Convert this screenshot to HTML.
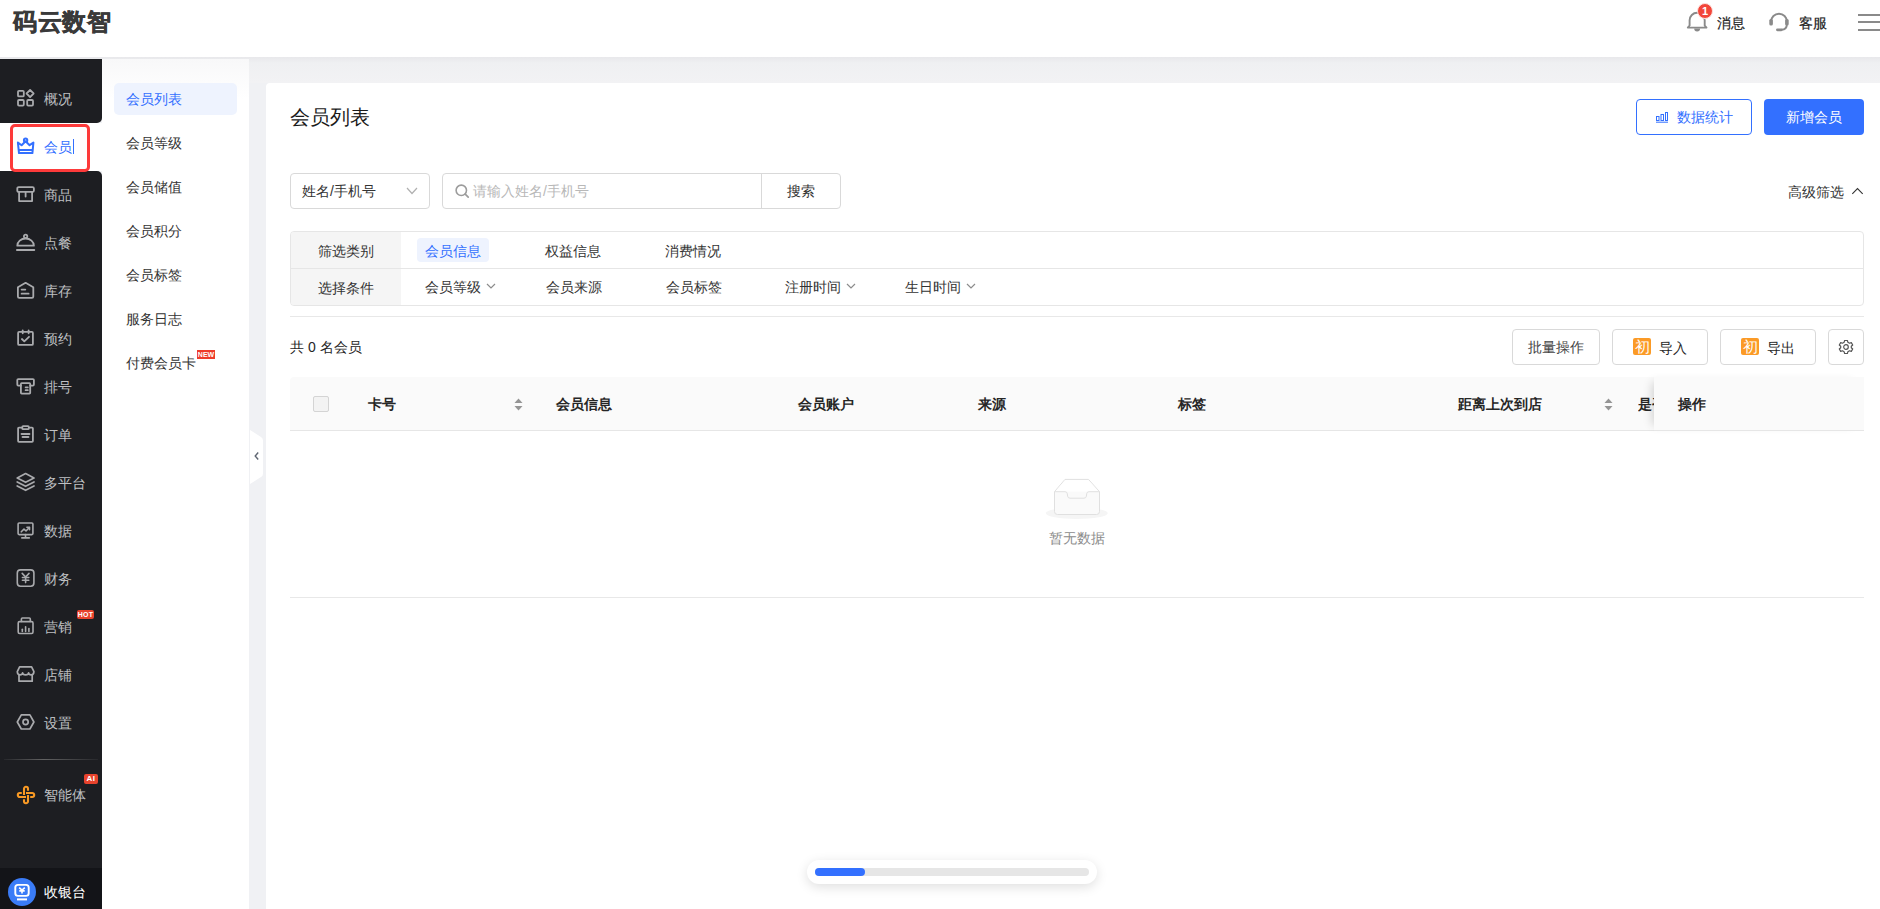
<!DOCTYPE html>
<html><head><meta charset="utf-8"><style>
*{box-sizing:border-box;margin:0;padding:0}
html,body{width:1880px;height:909px;overflow:hidden}
body{position:relative;background:#f0f1f4;font-family:"Liberation Sans",sans-serif;font-size:14px;color:#333}
.a{position:absolute;white-space:nowrap;line-height:16px}
.r{position:absolute}
svg{position:absolute;overflow:visible}
.si{color:#bfc0c3}
.bd{position:absolute;border:1px solid #d9d9d9;border-radius:4px;background:#fff}
.th{font-weight:bold;color:#262626}
</style></head><body>
<div class="r" style="left:0;top:0;width:1880px;height:57px;background:#fff"></div>
<div class="r" style="left:0;top:57px;width:1880px;height:26px;background:linear-gradient(#e8e8eb,#eff0f2 6px,#f2f2f4)"></div>
<div class="a" style="left:13px;top:8px;font-size:24px;line-height:28px;font-weight:bold;color:#3a3a3a;letter-spacing:0.5px;-webkit-text-stroke:0.5px #3a3a3a">码云数智</div>
<div class="r" style="left:0;top:59px;width:102px;height:64px;background:#1d1e22;border-bottom-right-radius:5px"></div>
<div class="r" style="left:0;top:123px;width:102px;height:48px;background:#fff"></div>
<div class="r" style="left:0;top:171px;width:102px;height:697px;background:#1d1e22;border-top-right-radius:5px"></div>
<div class="r" style="left:0;top:868px;width:102px;height:41px;background:#131418"></div>
<div class="r" style="left:10px;top:124px;width:80px;height:48px;border:3px solid #fd3a3a;border-radius:5px"></div>
<div class="r" style="left:4px;top:759px;width:94px;height:1px;background:linear-gradient(90deg,rgba(80,80,84,0.2),rgba(110,110,110,0.85) 42%,rgba(80,80,84,0.2))"></div>
<div class="a si" style="left:44px;top:91px;">概况</div>
<div class="a" style="left:44px;top:139px;color:#3370ff">会员</div>
<div class="r" style="left:73px;top:139px;width:1px;height:15px;background:#3370ff"></div>
<div class="a si" style="left:44px;top:187px;">商品</div>
<div class="a si" style="left:44px;top:235px;">点餐</div>
<div class="a si" style="left:44px;top:283px;">库存</div>
<div class="a si" style="left:44px;top:331px;">预约</div>
<div class="a si" style="left:44px;top:379px;">排号</div>
<div class="a si" style="left:44px;top:427px;">订单</div>
<div class="a si" style="left:44px;top:475px;">多平台</div>
<div class="a si" style="left:44px;top:523px;">数据</div>
<div class="a si" style="left:44px;top:571px;">财务</div>
<div class="a si" style="left:44px;top:619px;">营销</div>
<div class="a si" style="left:44px;top:667px;">店铺</div>
<div class="a si" style="left:44px;top:715px;">设置</div>
<div class="a si" style="left:44px;top:787px;">智能体</div>
<div class="a" style="left:44px;top:884px;color:#fff">收银台</div>
<div class="r" style="left:102px;top:59px;width:147px;height:850px;background:linear-gradient(#f8f8f9,#fff 40px)"></div>
<div class="r" style="left:114px;top:83px;width:123px;height:32px;background:#eef3fe;border-radius:5px"></div>
<div class="a" style="left:126px;top:91px;color:#3370ff">会员列表</div>
<div class="a" style="left:126px;top:135px;color:#333">会员等级</div>
<div class="a" style="left:126px;top:179px;color:#333">会员储值</div>
<div class="a" style="left:126px;top:223px;color:#333">会员积分</div>
<div class="a" style="left:126px;top:267px;color:#333">会员标签</div>
<div class="a" style="left:126px;top:311px;color:#333">服务日志</div>
<div class="a" style="left:126px;top:355px;color:#333">付费会员卡</div>
<div class="r" style="left:266px;top:83px;width:1614px;height:826px;background:#fff;border-top-left-radius:4px"></div>
<svg style="left:1686px;top:10px" width="22" height="22" viewBox="0 0 22 22"><path d="M3.6 15.5 V10.3 A7.55 7.55 0 0 1 18.7 10.3 V15.5 L20.5 17.6 H1.8 Z" fill="none" stroke="#8a8a8a" stroke-width="1.9" stroke-linejoin="round"/><path d="M8.2 18.6 H14.1 A2.95 3 0 0 1 8.2 18.6 Z" fill="#8a8a8a"/></svg>
<div class="r" style="left:1697px;top:3px;width:16px;height:16px;border-radius:50%;background:#f2463a;border:1px solid #fde0dc;color:#fff;font-size:11px;line-height:14px;text-align:center;font-weight:bold">1</div>
<div class="a" style="left:1717px;top:15px;color:#1f1f1f;-webkit-text-stroke:0.2px #1f1f1f">消息</div>
<svg style="left:1768px;top:11px" width="22" height="22" viewBox="0 0 22 22"><path d="M3.1 13 V10.6 A7.9 7.9 0 0 1 18.9 10.6 V13" fill="none" stroke="#8a8a8a" stroke-width="1.9"/><rect x="1.3" y="8" width="3.6" height="6.6" rx="1.6" fill="#8a8a8a"/><rect x="17.1" y="8" width="3.6" height="6.6" rx="1.6" fill="#8a8a8a"/><path d="M18.9 13 Q18.9 18.7 13.5 18.8" fill="none" stroke="#8a8a8a" stroke-width="1.9"/><rect x="8" y="17.4" width="6.7" height="2.9" rx="1.45" fill="#8a8a8a"/></svg>
<div class="a" style="left:1799px;top:15px;color:#1f1f1f;-webkit-text-stroke:0.2px #1f1f1f">客服</div>
<div class="r" style="left:1858px;top:14px;width:22px;height:2px;background:#8a8a8a"></div>
<div class="r" style="left:1858px;top:21px;width:22px;height:2px;background:#8a8a8a"></div>
<div class="r" style="left:1858px;top:29px;width:22px;height:2px;background:#8a8a8a"></div>
<div class="a" style="left:290px;top:106px;font-size:20px;line-height:22px;color:#1a1a1a">会员列表</div>
<div class="r" style="left:1636px;top:99px;width:116px;height:36px;border:1px solid #3370ff;border-radius:4px;background:#fff"></div>
<svg style="left:1655px;top:111px" width="14" height="12" viewBox="0 0 14 12"><g fill="none" stroke="#3370ff" stroke-width="1"><rect x="1.5" y="5.5" width="2.5" height="4"/><rect x="6" y="3.5" width="2.5" height="6"/><rect x="10.5" y="1.5" width="2" height="8"/><path d="M1 11.2 H13"/></g></svg>
<div class="a" style="left:1677px;top:109px;color:#3370ff">数据统计</div>
<div class="r" style="left:1764px;top:99px;width:100px;height:36px;border-radius:4px;background:#3370ff"></div>
<div class="a" style="left:1786px;top:109px;color:#fff">新增会员</div>
<div class="bd" style="left:290px;top:173px;width:140px;height:36px"></div>
<div class="a" style="left:302px;top:183px;color:#333">姓名/手机号</div>
<svg style="left:406px;top:187px" width="12" height="8" viewBox="0 0 12 8"><path d="M1 1 L6 6.5 L11 1" fill="none" stroke="#b0b0b0" stroke-width="1.2"/></svg>
<div class="bd" style="left:442px;top:173px;width:399px;height:36px"></div>
<div class="r" style="left:761px;top:173px;width:1px;height:36px;background:#d9d9d9"></div>
<svg style="left:455px;top:184px" width="15" height="15" viewBox="0 0 15 15"><circle cx="6.3" cy="6.3" r="5.2" fill="none" stroke="#9c9c9c" stroke-width="1.6"/><path d="M10.2 10.2 L13.2 13.2" stroke="#9c9c9c" stroke-width="1.7" stroke-linecap="round"/></svg>
<div class="a" style="left:473px;top:183px;color:#b8b8b8">请输入姓名/手机号</div>
<div class="a" style="left:787px;top:183px;color:#333">搜索</div>
<div class="a" style="left:1788px;top:184px;color:#333">高级筛选</div>
<svg style="left:1851px;top:187px" width="13" height="8" viewBox="0 0 13 8"><path d="M1.3 6.8 L6.5 1.6 L11.7 6.8" fill="none" stroke="#333" stroke-width="1.1"/></svg>
<div class="r" style="left:290px;top:231px;width:1574px;height:75px;border:1px solid #e6e6e6;border-radius:4px;background:#fff;overflow:hidden"><div class="r" style="left:0;top:0;width:110px;height:73px;background:#f5f5f5"></div><div class="r" style="left:0;top:36px;width:1572px;height:1px;background:#e6e6e6"></div></div>
<div class="a" style="left:318px;top:243px;color:#333">筛选类别</div>
<div class="a" style="left:318px;top:280px;color:#333">选择条件</div>
<div class="r" style="left:417px;top:238px;width:72px;height:24px;border-radius:4px;background:#eef3fe"></div>
<div class="a" style="left:425px;top:243px;color:#3370ff">会员信息</div>
<div class="a" style="left:545px;top:243px;color:#333">权益信息</div>
<div class="a" style="left:665px;top:243px;color:#333">消费情况</div>
<div class="a" style="left:425px;top:279px;color:#333">会员等级</div>
<svg style="left:486px;top:283px" width="10" height="6" viewBox="0 0 10 6"><path d="M1 1 L5 5 L9 1" fill="none" stroke="#8c8c8c" stroke-width="1.2"/></svg>
<div class="a" style="left:546px;top:279px;color:#333">会员来源</div>
<div class="a" style="left:666px;top:279px;color:#333">会员标签</div>
<div class="a" style="left:785px;top:279px;color:#333">注册时间</div>
<svg style="left:846px;top:283px" width="10" height="6" viewBox="0 0 10 6"><path d="M1 1 L5 5 L9 1" fill="none" stroke="#8c8c8c" stroke-width="1.2"/></svg>
<div class="a" style="left:905px;top:279px;color:#333">生日时间</div>
<svg style="left:966px;top:283px" width="10" height="6" viewBox="0 0 10 6"><path d="M1 1 L5 5 L9 1" fill="none" stroke="#8c8c8c" stroke-width="1.2"/></svg>
<div class="r" style="left:290px;top:316px;width:1574px;height:1px;background:#e8e8e8"></div>
<div class="a" style="left:290px;top:339px;color:#262626">共 0 名会员</div>
<div class="bd" style="left:1512px;top:329px;width:88px;height:36px"></div>
<div class="a" style="left:1528px;top:339px;color:#444">批量操作</div>
<div class="bd" style="left:1612px;top:329px;width:96px;height:36px"></div>
<div class="r" style="left:1633px;top:338px;width:18px;height:17px;border-radius:2px;background:#fb9a26;color:#fff;font-size:15px;line-height:17px;text-align:center">初</div>
<div class="a" style="left:1659px;top:340px;color:#262626">导入</div>
<div class="bd" style="left:1720px;top:329px;width:96px;height:36px"></div>
<div class="r" style="left:1741px;top:338px;width:18px;height:17px;border-radius:2px;background:#fb9a26;color:#fff;font-size:15px;line-height:17px;text-align:center">初</div>
<div class="a" style="left:1767px;top:340px;color:#262626">导出</div>
<div class="bd" style="left:1828px;top:329px;width:36px;height:36px"></div>
<svg style="left:1838px;top:339px" width="16" height="16" viewBox="0 0 16 16"><path d="M6.6 1.5 H9.4 L9.9 3.3 L11.5 4.2 L13.3 3.6 L14.7 6 L13.3 7.3 V8.7 L14.7 10 L13.3 12.4 L11.5 11.8 L9.9 12.7 L9.4 14.5 H6.6 L6.1 12.7 L4.5 11.8 L2.7 12.4 L1.3 10 L2.7 8.7 V7.3 L1.3 6 L2.7 3.6 L4.5 4.2 L6.1 3.3 Z" fill="none" stroke="#555" stroke-width="1.2" stroke-linejoin="round"/><circle cx="8" cy="8" r="2.3" fill="none" stroke="#555" stroke-width="1.2"/></svg>
<div class="r" style="left:290px;top:377px;width:1574px;height:54px;background:#fafafa;border-top-left-radius:4px;border-bottom:1px solid #e6e6e6"></div>
<div class="r" style="left:313px;top:396px;width:16px;height:16px;border:1px solid #d4d4d4;border-radius:2px;background:#f3f3f3"></div>
<div class="a th" style="left:368px;top:396px;">卡号</div>
<svg style="left:514px;top:398px" width="9" height="13" viewBox="0 0 9 13"><path d="M4.5 0.5 L8.5 5 H0.5 Z" fill="#959595"/><path d="M0.5 8 H8.5 L4.5 12.5 Z" fill="#959595"/></svg>
<div class="a th" style="left:556px;top:396px;">会员信息</div>
<div class="a th" style="left:798px;top:396px;">会员账户</div>
<div class="a th" style="left:978px;top:396px;">来源</div>
<div class="a th" style="left:1178px;top:396px;">标签</div>
<div class="a th" style="left:1458px;top:396px;">距离上次到店</div>
<svg style="left:1604px;top:398px" width="9" height="13" viewBox="0 0 9 13"><path d="M4.5 0.5 L8.5 5 H0.5 Z" fill="#959595"/><path d="M0.5 8 H8.5 L4.5 12.5 Z" fill="#959595"/></svg>
<div class="r" style="left:1638px;top:377px;width:16px;height:53px;overflow:hidden"><div class="a th" style="left:0;top:19px">是否</div></div>
<div class="r" style="left:1654px;top:377px;width:210px;height:53px;background:#fafafa;box-shadow:-7px 0 9px -5px rgba(0,0,0,0.16)"></div>
<div class="r" style="left:1654px;top:430px;width:210px;height:1px;background:#e6e6e6"></div>
<div class="a th" style="left:1678px;top:396px;">操作</div>
<svg style="left:1045px;top:477px" width="64" height="44" viewBox="0 0 64 44"><ellipse cx="31.8" cy="36.3" rx="31" ry="5.7" fill="#f5f5f5"/><path d="M9.5 14.7 L20 2.4 H43.5 L54.5 14.7 V34.5 Q54.5 37.5 51.5 37.5 H12.5 Q9.5 37.5 9.5 34.5 Z" fill="#fafafa" stroke="#e0e0e0" stroke-width="1"/><path d="M10 14.7 L20.2 3 H43.3 L54 14.7 Z" fill="#fff"/><path d="M9.5 14.7 H20 Q22 14.7 22.3 16.7 L22.6 19.2 Q23 21.2 25 21.2 H39 Q41 21.2 41.4 19.2 L41.7 16.7 Q42 14.7 44 14.7 H54.5" fill="#fafafa" stroke="#e0e0e0" stroke-width="1"/></svg>
<div class="a" style="left:1049px;top:530px;color:#8c8c8c">暂无数据</div>
<div class="r" style="left:290px;top:597px;width:1574px;height:1px;background:#e8e8e8"></div>
<div class="r" style="left:807px;top:860px;width:290px;height:24px;border-radius:12px;background:#fff;box-shadow:0 3px 12px rgba(0,0,0,0.13)"></div>
<div class="r" style="left:815px;top:868px;width:274px;height:8px;border-radius:4px;background:#e6e6e6"></div>
<div class="r" style="left:815px;top:868px;width:50px;height:8px;border-radius:4px;background:#3370ff"></div>
<svg style="left:250px;top:430px" width="14" height="54" viewBox="0 0 14 54"><path d="M0 0 L11 7 Q13 8.2 13 10.5 V43.5 Q13 45.8 11 47 L0 54 Z" fill="#fff"/><path d="M8.2 22.5 L5.2 26 L8.2 29.5" fill="none" stroke="#5f6672" stroke-width="1.4"/></svg>
<svg style="left:16px;top:88px" width="20" height="20" viewBox="0 0 20 20"><g fill="none" stroke="#a9aaad" stroke-width="1.8" stroke-linejoin="round" stroke-linecap="round"><rect x="2" y="2.8" width="5.8" height="5.6" rx="1"/><path d="M14.1 1.9 L17.6 5.5 L14.1 9.1 L10.6 5.5 Z"/><rect x="2" y="12" width="5.8" height="5.6" rx="1"/><rect x="11.2" y="12" width="5.8" height="5.6" rx="1"/></g></svg>
<svg style="left:16px;top:136px" width="20" height="20" viewBox="0 0 20 20"><g fill="none" stroke="#3370ff" stroke-width="2" stroke-linejoin="round" stroke-linecap="round"><path d="M1.9 6.6 L5.6 9.2 L9.6 5.2 L13.6 9.2 L17.4 6.6 L16.4 17.1 H3 Z"/><path d="M3.6 13.9 H15.8"/><circle cx="9.6" cy="4.3" r="1.7"/></g></svg>
<svg style="left:16px;top:184px" width="20" height="20" viewBox="0 0 20 20"><g fill="none" stroke="#a9aaad" stroke-width="1.8" stroke-linejoin="round" stroke-linecap="round"><rect x="1.3" y="3.1" width="16.6" height="4.8" rx="1.4"/><path d="M3.1 8 V17.1 H16.1 V8"/><path d="M9.6 8 V12.6"/></g></svg>
<svg style="left:16px;top:232px" width="20" height="20" viewBox="0 0 20 20"><g fill="none" stroke="#a9aaad" stroke-width="1.8" stroke-linejoin="round" stroke-linecap="round"><path d="M1.3 13.7 A8.3 7.2 0 0 1 17.9 13.7 Z"/><circle cx="9.6" cy="4.4" r="1.7"/><path d="M0.9 18 H18.3"/></g></svg>
<svg style="left:16px;top:280px" width="20" height="20" viewBox="0 0 20 20"><g fill="none" stroke="#a9aaad" stroke-width="1.8" stroke-linejoin="round" stroke-linecap="round"><path d="M1.9 7.2 L9.6 2.8 L17.3 7.2 V16.6 Q17.3 17.9 16 17.9 H3.2 Q1.9 17.9 1.9 16.6 Z"/><path d="M5.6 9.6 H9.3"/><path d="M5.6 13.7 H12.6"/></g></svg>
<svg style="left:16px;top:328px" width="20" height="20" viewBox="0 0 20 20"><g fill="none" stroke="#a9aaad" stroke-width="1.8" stroke-linejoin="round" stroke-linecap="round"><rect x="2.1" y="3.9" width="14.8" height="13" rx="1"/><path d="M6.7 2.4 V5.3"/><path d="M12.6 2.4 V5.3"/><path d="M5.9 11 L8.3 13.3 L13 8.8"/></g></svg>
<svg style="left:16px;top:376px" width="20" height="20" viewBox="0 0 20 20"><g fill="none" stroke="#a9aaad" stroke-width="1.8" stroke-linejoin="round" stroke-linecap="round"><path d="M4.9 9.6 H2.3 Q1.3 9.6 1.3 8.6 V4.1 Q1.3 3.1 2.3 3.1 H16.9 Q17.9 3.1 17.9 4.1 V8.6 Q17.9 9.6 16.9 9.6 H14.2"/><rect x="4.9" y="7.2" width="9.3" height="10.4" rx="0.8"/><path d="M9.6 11.3 H11.8"/><path d="M9.6 14.2 H11.8"/></g></svg>
<svg style="left:16px;top:424px" width="20" height="20" viewBox="0 0 20 20"><g fill="none" stroke="#a9aaad" stroke-width="1.8" stroke-linejoin="round" stroke-linecap="round"><path d="M5.8 3.7 H3 Q2.1 3.7 2.1 4.6 V16.9 Q2.1 17.8 3 17.8 H16 Q16.9 17.8 16.9 16.9 V4.6 Q16.9 3.7 16 3.7 H13.3"/><rect x="6.3" y="2.2" width="6.5" height="3" rx="0.8"/><path d="M5.5 10 H13.5"/><path d="M6.5 13 H12.5"/></g></svg>
<svg style="left:16px;top:472px" width="20" height="20" viewBox="0 0 20 20"><g fill="none" stroke="#a9aaad" stroke-width="1.7" stroke-linejoin="round" stroke-linecap="round"><path d="M9.6 1.6 L18 6 L9.6 10.3 L1.2 6 Z"/><path d="M1.2 10 L9.6 14.3 L18 10"/><path d="M1.2 14 L9.6 18.3 L18 14"/></g></svg>
<svg style="left:16px;top:520px" width="20" height="20" viewBox="0 0 20 20"><g fill="none" stroke="#a9aaad" stroke-width="1.6" stroke-linejoin="round" stroke-linecap="round"><rect x="2.1" y="3" width="14.8" height="11.6" rx="1"/><path d="M9.5 14.6 V17.2"/><path d="M5.8 17.9 H13.3"/><path d="M5.3 11.8 L8 9 L10 11 L13.3 7.5"/><path d="M10.9 7.3 H13.5 V9.8"/></g></svg>
<svg style="left:16px;top:568px" width="20" height="20" viewBox="0 0 20 20"><g fill="none" stroke="#a9aaad" stroke-width="1.6" stroke-linejoin="round" stroke-linecap="round"><rect x="1.3" y="1.9" width="16.6" height="16.3" rx="3.2"/><path d="M6.2 5.4 L9.6 9 L13 5.4"/><path d="M9.6 9 V14.6"/><path d="M6.4 9.5 H12.8"/><path d="M6.4 12.2 H12.8"/></g></svg>
<svg style="left:16px;top:616px" width="20" height="20" viewBox="0 0 20 20"><g fill="none" stroke="#a9aaad" stroke-width="1.6" stroke-linejoin="round" stroke-linecap="round"><path d="M5.4 5.4 V3 Q5.4 2 6.4 2 H13.3 Q14.3 2 14.3 3 V5.4"/><rect x="2.2" y="5.6" width="14.8" height="11.9" rx="1.4"/><path d="M6.3 15.4 V13.2"/><path d="M9.6 15.4 V10.8"/><path d="M12.9 15.4 V12.6"/></g></svg>
<svg style="left:16px;top:664px" width="20" height="20" viewBox="0 0 20 20"><g fill="none" stroke="#a9aaad" stroke-width="1.7" stroke-linejoin="round" stroke-linecap="round"><path d="M3.6 2.9 H15.6 L17.9 7.6 Q17.9 10.9 15.4 10.9 Q12.6 10.9 12.6 8.8 Q12.6 10.9 9.6 10.9 Q6.6 10.9 6.6 8.8 Q6.6 10.9 3.8 10.9 Q1.3 10.9 1.3 7.6 Z"/><path d="M3 11 V17.2 H16.2 V11"/></g></svg>
<svg style="left:16px;top:712px" width="20" height="20" viewBox="0 0 20 20"><g fill="none" stroke="#a9aaad" stroke-width="1.7" stroke-linejoin="round" stroke-linecap="round"><path d="M5.3 2.9 H13.9 L17.9 10 L13.9 17 H5.3 L1.3 10 Z"/><circle cx="9.6" cy="10" r="2.6"/></g></svg>
<svg style="left:16px;top:785px" width="20" height="20" viewBox="0 0 20 20"><g fill="none" stroke="#f99a24" stroke-width="2.1" stroke-linejoin="round" stroke-linecap="round"><path d="M8 10 V3.8 A2 2 0 0 1 12 3.8 V5.8" stroke-linecap="butt"/><g transform="rotate(90 10 10)"><path d="M8 10 V3.8 A2 2 0 0 1 12 3.8 V5.8" stroke-linecap="butt"/></g><g transform="rotate(180 10 10)"><path d="M8 10 V3.8 A2 2 0 0 1 12 3.8 V5.8" stroke-linecap="butt"/></g><g transform="rotate(270 10 10)"><path d="M8 10 V3.8 A2 2 0 0 1 12 3.8 V5.8" stroke-linecap="butt"/></g></g></svg>
<div class="r" style="left:77px;top:610px;width:17px;height:9px;border-radius:2px;background:#e8432d;color:#fff;font-size:7px;line-height:9px;text-align:center;font-weight:bold;letter-spacing:0.2px">HOT</div>
<div class="r" style="left:84px;top:774px;width:14px;height:10px;border-radius:2px;background:#e8432d;color:#fff;font-size:8px;line-height:10px;text-align:center;font-weight:bold;letter-spacing:0.5px">AI</div>
<div class="r" style="left:197px;top:350px;width:18px;height:9px;background:#ee3b2b;color:#fff;font-size:7px;line-height:9px;text-align:center;font-weight:bold">NEW</div>
<svg style="left:8px;top:878px" width="28" height="28" viewBox="0 0 28 28"><circle cx="14" cy="14" r="14" fill="#3a7cf7"/><rect x="7.3" y="6.9" width="13.4" height="11" rx="2.6" fill="none" stroke="#fff" stroke-width="1.9"/><path d="M11.2 9.6 L14 12.2 L16.8 9.6 M14 12.2 V15.6 M11.3 12.9 H16.7" fill="none" stroke="#fff" stroke-width="1.6"/><rect x="9" y="20.4" width="10" height="2" fill="#fff"/></svg>
</body></html>
